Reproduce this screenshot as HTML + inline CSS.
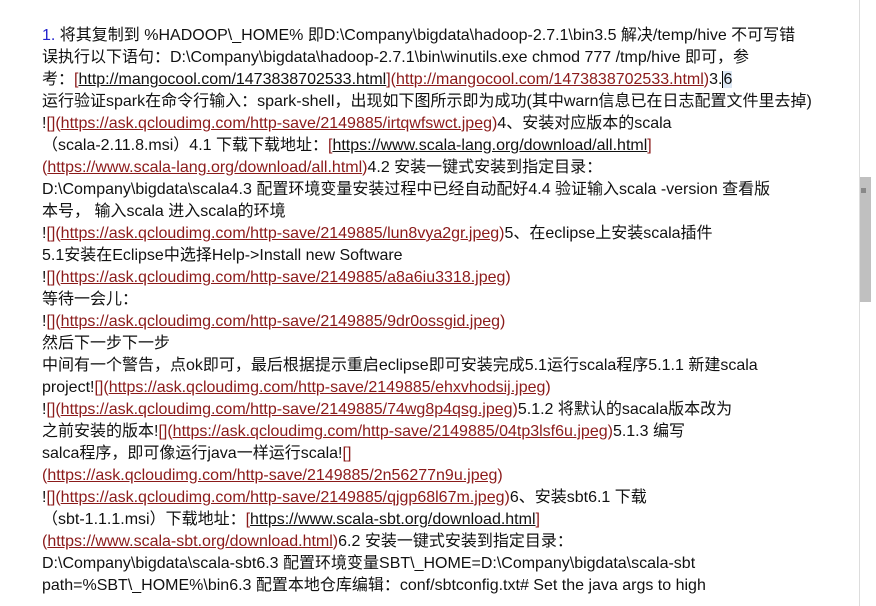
<!DOCTYPE html>
<html><head><meta charset="utf-8"><style>
html,body{margin:0;padding:0;background:#fff;width:876px;height:606px;overflow:hidden}
#c{position:absolute;left:42px;top:25px;font-family:"Liberation Sans","Noto Sans CJK SC",sans-serif;font-size:16px;line-height:22px;color:#111}
#c div{white-space:nowrap;height:22px}
.r{color:#8b1a1a}
.u{text-decoration:underline}
.b{color:#22c}
#vl{position:absolute;left:859px;top:0;width:1px;height:606px;background:#ddd}
#sb{position:absolute;left:860px;top:177px;width:11px;height:125px;background:#c0c0c0}
#sb i{position:absolute;left:1px;top:11px;width:5px;height:5px;background:#888}
</style></head><body>
<div id="c">
<div><span class="b">1.</span> 将其复制到 %HADOOP\_HOME% 即D:\Company\bigdata\hadoop-2.7.1\bin3.5 解决/temp/hive 不可写错</div>
<div>误执行以下语句：D:\Company\bigdata\hadoop-2.7.1\bin\winutils.exe chmod 777 /tmp/hive 即可，参</div>
<div>考：<span class="r">[</span><span class="u">http://mangocool.com/1473838702533.html</span><span class="r">](<span class="u">http://mangocool.com/1473838702533.html</span>)</span>3.<span style="background:#dde8f5;border-left:1px solid #000">6</span></div>
<div>运行验证spark在命令行输入：spark-shell，出现如下图所示即为成功(其中warn信息已在日志配置文件里去掉)</div>
<div>!<span class="r">[](<span class="u">https://ask.qcloudimg.com/http-save/2149885/irtqwfswct.jpeg</span>)</span>4、安装对应版本的scala</div>
<div>（scala-2.11.8.msi）4.1 下载下载地址：<span class="r">[</span><span class="u">https://www.scala-lang.org/download/all.html</span><span class="r">]</span></div>
<div><span class="r">(<span class="u">https://www.scala-lang.org/download/all.html</span>)</span>4.2 安装一键式安装到指定目录：</div>
<div>D:\Company\bigdata\scala4.3 配置环境变量安装过程中已经自动配好4.4 验证输入scala -version 查看版</div>
<div>本号， 输入scala 进入scala的环境</div>
<div>!<span class="r">[](<span class="u">https://ask.qcloudimg.com/http-save/2149885/lun8vya2gr.jpeg</span>)</span>5、在eclipse上安装scala插件</div>
<div>5.1安装在Eclipse中选择Help-&gt;Install new Software</div>
<div>!<span class="r">[](<span class="u">https://ask.qcloudimg.com/http-save/2149885/a8a6iu3318.jpeg</span>)</span></div>
<div>等待一会儿：</div>
<div>!<span class="r">[](<span class="u">https://ask.qcloudimg.com/http-save/2149885/9dr0ossgid.jpeg</span>)</span></div>
<div>然后下一步下一步</div>
<div>中间有一个警告，点ok即可，最后根据提示重启eclipse即可安装完成5.1运行scala程序5.1.1 新建scala</div>
<div>project!<span class="r">[](<span class="u">https://ask.qcloudimg.com/http-save/2149885/ehxvhodsij.jpeg</span>)</span></div>
<div>!<span class="r">[](<span class="u">https://ask.qcloudimg.com/http-save/2149885/74wg8p4qsg.jpeg</span>)</span>5.1.2 将默认的sacala版本改为</div>
<div>之前安装的版本!<span class="r">[](<span class="u">https://ask.qcloudimg.com/http-save/2149885/04tp3lsf6u.jpeg</span>)</span>5.1.3 编写</div>
<div>salca程序，即可像运行java一样运行scala!<span class="r">[]</span></div>
<div><span class="r">(<span class="u">https://ask.qcloudimg.com/http-save/2149885/2n56277n9u.jpeg</span>)</span></div>
<div>!<span class="r">[](<span class="u">https://ask.qcloudimg.com/http-save/2149885/qjgp68l67m.jpeg</span>)</span>6、安装sbt6.1 下载</div>
<div>（sbt-1.1.1.msi）下载地址：<span class="r">[</span><span class="u">https://www.scala-sbt.org/download.html</span><span class="r">]</span></div>
<div><span class="r">(<span class="u">https://www.scala-sbt.org/download.html</span>)</span>6.2 安装一键式安装到指定目录：</div>
<div>D:\Company\bigdata\scala-sbt6.3 配置环境变量SBT\_HOME=D:\Company\bigdata\scala-sbt</div>
<div>path=%SBT\_HOME%\bin6.3 配置本地仓库编辑：conf/sbtconfig.txt# Set the java args to high</div>
</div>
<div id="vl"></div>
<div id="sb"><i></i></div>
</body></html>
